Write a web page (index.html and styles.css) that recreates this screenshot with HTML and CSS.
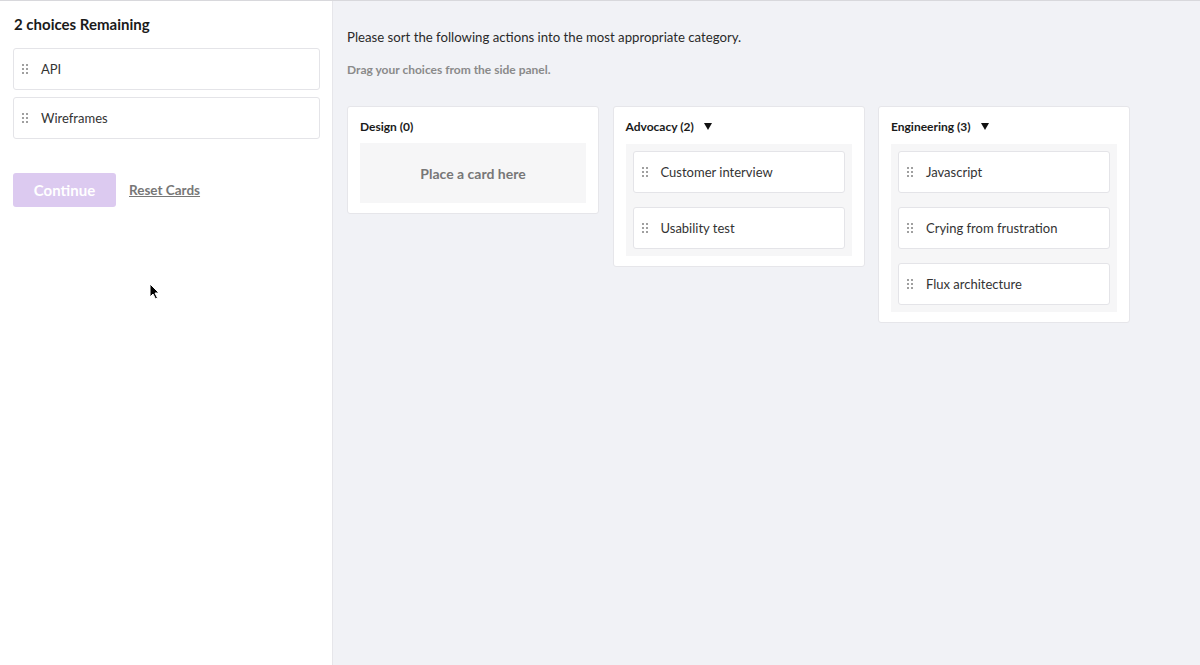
FILE: index.html
```html
<!DOCTYPE html>
<html>

<head>
	<title>Card Sort</title>
	<link rel="stylesheet" href="styles.css">
</head>

<body>
	<div class="page">
		<div class="side-panel">
			<h2 class="remaining">2 choices Remaining</h2>
			<div class="choice-list">
				<div class="choice-card"><span class="grip"></span>API</div>
				<div class="choice-card"><span class="grip"></span>Wireframes</div>
			</div>
			<div class="actions">
				<button class="continue-btn">Continue</button>
				<a class="reset-link">Reset Cards</a>
			</div>
			<svg class="cursor" width="12" height="18" viewBox="0 0 12 18">
				<path d="M1 1 L1 14 L4 11 L6.5 16 L8.5 15 L6 10 L10 10 Z" fill="#000" stroke="#fff" stroke-width="1"/>
			</svg>
		</div>

		<div class="main-area">
			<p class="instructions">Please sort the following actions into the most appropriate category.</p>
			<p class="hint">Drag your choices from the side panel.</p>

			<div class="categories">
				<div class="category">
					<div class="category-header">Design (0)</div>
					<div class="drop-zone empty">Place a card here</div>
				</div>

				<div class="category">
					<div class="category-header">Advocacy (2) <span class="caret"></span></div>
					<div class="drop-zone">
						<div class="choice-card"><span class="grip"></span>Customer interview</div>
						<div class="choice-card"><span class="grip"></span>Usability test</div>
					</div>
				</div>

				<div class="category">
					<div class="category-header">Engineering (3) <span class="caret"></span></div>
					<div class="drop-zone">
						<div class="choice-card"><span class="grip"></span>Javascript</div>
						<div class="choice-card"><span class="grip"></span>Crying from frustration</div>
						<div class="choice-card"><span class="grip"></span>Flux architecture</div>
					</div>
				</div>
			</div>
		</div>
	</div>
</body>

</html>
```

FILE: styles.css
```css
body {
	margin: 0;
	padding: 0;
	font-family: "Lato", "Liberation Sans", sans-serif;
	color: #222;
	background-color: #f1f2f6;
}

.page {
	display: flex;
	height: 665px;
	border-top: 1px solid #d8d8dc;
	box-sizing: border-box;
}

.side-panel {
	position: relative;
	width: 333px;
	background-color: #fff;
	border-right: 1px solid #e6e6ea;
	padding: 0 13px;
	box-sizing: border-box;
	flex-shrink: 0;
}

.remaining {
	margin: 14px 0 15px 1px;
	font-size: 15px;
	font-weight: bold;
	color: #1a1a1a;
}

.choice-list {
	display: flex;
	flex-direction: column;
	gap: 7px;
	width: 307px;
}

.choice-card {
	display: flex;
	align-items: center;
	height: 42px;
	background-color: #fff;
	border: 1px solid #e4e4e8;
	border-radius: 3px;
	box-sizing: border-box;
	font-size: 13px;
	color: #333;
	padding-left: 7px;
}

.grip {
	width: 8px;
	height: 12px;
	margin-right: 12px;
	background-image: radial-gradient(circle at 2px 2px, #a0a0a0 1px, transparent 1.3px);
	background-size: 4px 4px;
}

.actions {
	display: flex;
	align-items: center;
	margin-top: 34px;
	gap: 13px;
}

.continue-btn {
	width: 103px;
	height: 34px;
	border: none;
	border-radius: 3px;
	background-color: #dccaf0;
	color: #fff;
	font-family: inherit;
	font-size: 15px;
	font-weight: bold;
}

.reset-link {
	font-size: 13.5px;
	font-weight: bold;
	color: #777;
	text-decoration: underline;
}

.cursor {
	position: absolute;
	left: 149px;
	top: 282px;
}

.main-area {
	flex: 1;
	padding: 0 14px;
}

.instructions {
	margin: 28px 0 0 0;
	font-size: 13.2px;
	color: #2a2a2a;
}

.hint {
	margin: 17px 0 0 0;
	font-size: 12px;
	font-weight: bold;
	color: #8a8a8a;
}

.categories {
	display: flex;
	align-items: flex-start;
	gap: 13.5px;
	margin-top: 29px;
}

.category {
	width: 252px;
	background-color: #fff;
	border: 1px solid #e6e6ea;
	border-radius: 3px;
	box-sizing: border-box;
	padding: 12px 12px 10px 12px;
}

.category-header {
	display: flex;
	align-items: center;
	height: 14px;
	font-size: 12px;
	font-weight: bold;
	color: #1a1a1a;
	margin-bottom: 10px;
}

.caret {
	width: 0;
	height: 0;
	margin-left: 10px;
	border-style: solid;
	border-width: 7px 4.5px 0 4.5px;
	border-color: #111 transparent transparent transparent;
}

.drop-zone {
	display: flex;
	flex-direction: column;
	gap: 14px;
	background-color: #f6f6f7;
	padding: 7px;
	margin-top: 11px;
}

.drop-zone.empty {
	height: 60px;
	box-sizing: border-box;
	align-items: center;
	justify-content: center;
	margin-top: 6px;
	font-size: 14px;
	font-weight: bold;
	color: #777;
}
```
